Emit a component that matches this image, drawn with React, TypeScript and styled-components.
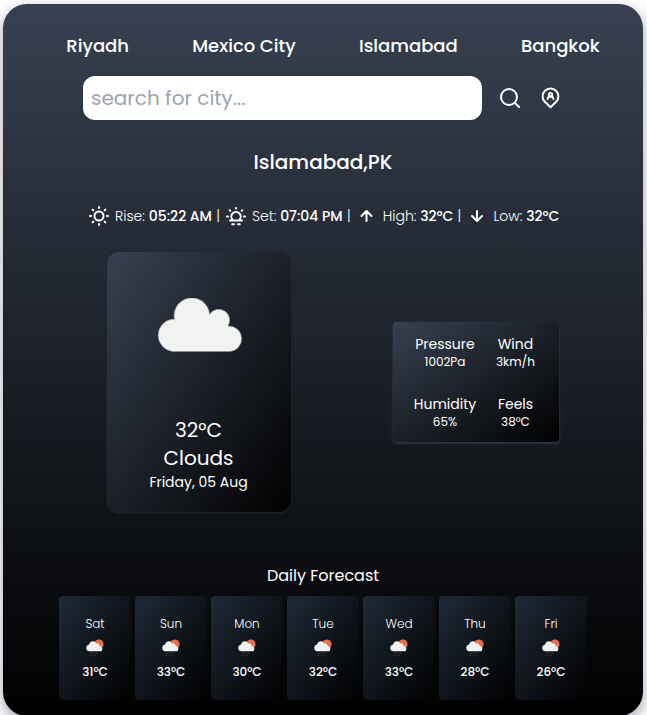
import React from "react";
import styled, { createGlobalStyle } from "styled-components";

const GlobalStyle = createGlobalStyle`
  *, *::before, *::after { box-sizing: border-box; }
  body {
    margin: 0;
    height: 100vh;
    overflow: hidden;
    background: #fff;
    font-family: Poppins, Inter, "Liberation Sans", sans-serif;
  }
  p, h1, h2 { margin: 0; font: inherit; }
`;

const Card = styled.main`
  width: 640px;
  height: 712px;
  margin: 4px 0 0 3px;
  padding-top: 28px;
  border-radius: 24px;
  color: #fff;
  background: linear-gradient(to bottom, #374151, #000);
  box-shadow: 0 5px 14px rgba(20, 20, 50, 0.4);
`;

const Cities = styled.nav`
  display: flex;
  gap: 63.2px;
  padding-left: 63.3px;
`;

const CityButton = styled.button`
  padding: 0;
  border: 0;
  background: none;
  color: inherit;
  font: 500 18px/28px Poppins, Inter, sans-serif;
  white-space: nowrap;
`;

const SearchBar = styled.form`
  display: flex;
  align-items: center;
  margin-top: 16px;
  padding-left: 80px;
`;

const SearchInput = styled.input`
  width: 399px;
  height: 44px;
  padding: 8px;
  border: 0;
  border-radius: 12px;
  outline: none;
  background: #fff;
  color: #374151;
  font: 400 20px/28px Poppins, Inter, sans-serif;
  &::placeholder { color: #9ca3af; opacity: 1; }
`;

const IconButton = styled.button`
  display: flex;
  margin-left: 16px;
  padding: 0;
  border: 0;
  background: none;
  color: inherit;
`;

const Icon = styled.svg`
  display: block;
  flex: none;
  width: 24px;
  height: 24px;
  fill: none;
  stroke: currentColor;
  stroke-width: 2;
  stroke-linecap: round;
  stroke-linejoin: round;
`;

const Place = styled.h1`
  margin-top: 28px;
  text-align: center;
  font-size: 20px;
  font-weight: 500;
  line-height: 28px;
`;

const Details = styled.div`
  display: flex;
  align-items: center;
  margin-top: 28px;
  padding-left: 84px;
  font-size: 14px;
  font-weight: 300;
  line-height: 24px;
  white-space: nowrap;
`;

const Detail = styled.p`
  margin-left: 4px;
  b { font-weight: 500; }
`;

const Divider = styled.span`
  width: 12px;
  text-align: center;
`;

const Current = styled.section`
  display: flex;
  align-items: center;
  gap: 102.4px;
  margin-top: 24px;
  padding-left: 104px;
`;

const Panel = styled.div`
  background: linear-gradient(to bottom right, #374151, #000);
`;

const Summary = styled(Panel)`
  display: flex;
  flex-direction: column;
  align-items: center;
  width: 184px;
  height: 260px;
  padding: 46px 1px 20px 0;
  border-radius: 12px;
  font-size: 20px;
  line-height: 28px;
  box-shadow: 0 1px 3px #1f2937, 0 1px 2px -1px #1f2937;
`;

const CloudImage = styled.svg`
  width: 86px;
  height: 54px;
  margin: 0 0 auto 2px;
`;

const DateText = styled.p`
  font-size: 14px;
  line-height: 20px;
`;

const Stats = styled(Panel)`
  display: grid;
  grid-template-columns: 62px 39px;
  gap: 24px 20px;
  width: 166px;
  height: 120px;
  padding: 12px 0 12px 20.6px;
  border-radius: 4px;
  box-shadow: 0 1px 3px #374151, 0 1px 2px -1px #374151;
`;

const Stat = styled.div`
  display: flex;
  flex-direction: column;
  align-items: center;
  font-size: 14px;
  line-height: 20px;
  white-space: nowrap;
  small { font-size: 12px; line-height: 16px; }
`;

const ForecastTitle = styled.h2`
  margin-top: 52px;
  text-align: center;
  font-size: 16px;
  line-height: 24px;
`;

const ForecastRow = styled.div`
  display: flex;
  gap: 4px;
  margin-top: 8px;
  padding-left: 56px;
`;

const Day = styled.div`
  display: flex;
  flex-direction: column;
  align-items: center;
  width: 72px;
  height: 104px;
  padding: 20px 0;
  border-radius: 4px;
  background: linear-gradient(to bottom right, #1f2937, #000);
  font-size: 12px;
  font-weight: 300;
  line-height: 16px;
  b { font-weight: 500; }
`;

const RainImage = styled.svg`
  width: 20px;
  height: 20px;
  margin: 6px 0;
`;

const SearchIcon = () => (
  <Icon viewBox="0 0 24 24">
    <circle cx="11" cy="11" r="8" />
    <path d="M17.3 17.3 21 21" />
  </Icon>
);

const LocationIcon = () => (
  <Icon viewBox="-0.5 0 24 24">
    <path d="M12 21.2l-5.7-5.4a7.9 7.9 0 1 1 11.4 0z" />
    <circle cx="12" cy="8.7" r="1.7" strokeWidth="1.8" />
    <path d="M9 13c.3-1.7 1.4-2.5 3-2.5s2.7.8 3 2.5" strokeWidth="1.8" />
  </Icon>
);

const SunriseIcon = () => (
  <Icon viewBox="0 0 24 24">
    <path d="M12 3v1M4 12H3M21 12h-1M5.64 5.64l.7.7M18.36 5.64l-.7.7" />
    <path d="M12 21v-1M5.64 18.36l.7-.7M18.36 18.36l-.7-.7" />
    <circle cx="12" cy="12" r="4.5" />
  </Icon>
);

const SunsetIcon = () => (
  <Icon viewBox="0 0 24 24">
    <path d="M12 4v.6M4 12.5H3M21 12.5h-1M5.7 6.2l.6.6M18.3 6.2l-.6.6" />
    <path d="M6 16.5h12M8.4 15.6a4.7 4.7 0 1 1 7.2 0M8.2 20.2h1.8M14 20.2h1.8" />
  </Icon>
);

const ArrowUpIcon = () => (
  <Icon viewBox="0.5 0 24 24">
    <path d="M12 17V7M7 12l5-5 5 5" />
  </Icon>
);

const ArrowDownIcon = () => (
  <Icon viewBox="0 0 24 24">
    <path d="M12 7v10M7 12l5 5 5-5" />
  </Icon>
);

const Cloud = () => (
  <CloudImage viewBox="0 0 86 54">
    <path
      d="M15.5 53.5A16.3 16.3 0 0 1 14.4 21.3L17.4 21.2A17.8 17.8 0 1 1 52.6 16.4A10.6 10.6 0 0 1 71 28A12.8 12.8 0 0 1 73.2 53.5Z"
      fill="#f2f2f0"
      stroke="#8b8f96"
      strokeWidth=".6"
    />
  </CloudImage>
);

const RainCloud = () => (
  <RainImage viewBox="0.8 0.4 19.2 19.2">
    <circle cx="14.1" cy="6.3" r="4.5" fill="#ec6e4c" />
    <path
      d="M4.8 13.2A3.3 3.3 0 0 1 4.7 6.7A3.6 3.6 0 0 1 11.6 5.8A2.3 2.3 0 0 1 14.9 8A2.6 2.6 0 0 1 14.8 13.2Z"
      fill="#f2f2f2"
    />
    <path
      d="M7 14.5l-.6 1.1M9.6 14.5l-.6 1.1M12.2 14.5l-.6 1.1M6.2 16.6l-.5.9M8.7 16.6l-.5.9M11.2 16.6l-.5.9"
      stroke="#4c4c50"
      strokeWidth=".9"
    />
  </RainImage>
);

const cities = ["Riyadh", "Mexico City", "Islamabad", "Bangkok"];

const details = [
  { icon: <SunriseIcon />, label: "Rise:", value: "05:22 AM" },
  { icon: <SunsetIcon />, label: "Set:", value: "07:04 PM" },
  { icon: <ArrowUpIcon />, label: "High:", value: "32°C" },
  { icon: <ArrowDownIcon />, label: "Low:", value: "32°C" },
];

const stats = [
  ["Pressure", "1002Pa"],
  ["Wind", "3km/h"],
  ["Humidity", "65%"],
  ["Feels", "38°C"],
];

const forecast = [
  ["Sat", 31],
  ["Sun", 33],
  ["Mon", 30],
  ["Tue", 32],
  ["Wed", 33],
  ["Thu", 28],
  ["Fri", 26],
];

export default function App() {
  return (
    <>
      <GlobalStyle />
      <Card>
        <Cities>
          {cities.map((city) => (
            <CityButton key={city}>{city}</CityButton>
          ))}
        </Cities>
        <SearchBar onSubmit={(e) => e.preventDefault()}>
          <SearchInput placeholder="search for city..." />
          <IconButton aria-label="Search"><SearchIcon /></IconButton>
          <IconButton type="button" aria-label="Use my location"><LocationIcon /></IconButton>
        </SearchBar>
        <Place>Islamabad,PK</Place>
        <Details>
          {details.map((d, i) => (
            <React.Fragment key={d.label}>
              {i > 0 && <Divider>|</Divider>}
              {d.icon}
              <Detail>{d.label} <b>{d.value}</b></Detail>
            </React.Fragment>
          ))}
        </Details>
        <Current>
          <Summary>
            <Cloud />
            <p>32°C</p>
            <p>Clouds</p>
            <DateText>Friday, 05 Aug</DateText>
          </Summary>
          <Stats>
            {stats.map(([label, value]) => (
              <Stat key={label}>
                {label}
                <small>{value}</small>
              </Stat>
            ))}
          </Stats>
        </Current>
        <ForecastTitle>Daily Forecast</ForecastTitle>
        <ForecastRow>
          {forecast.map(([day, temp]) => (
            <Day key={day}>
              {day}
              <RainCloud />
              <b>{temp}°C</b>
            </Day>
          ))}
        </ForecastRow>
      </Card>
    </>
  );
}
